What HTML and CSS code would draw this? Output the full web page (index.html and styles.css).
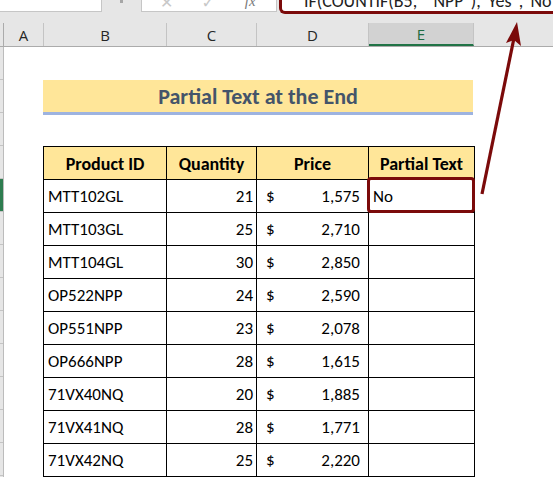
FILE: index.html
```html
<!DOCTYPE html>
<html>
<head>
<meta charset="utf-8">
<link rel="stylesheet" href="styles.css">
</head>
<body>
<div class="page">
  <div class="topbar">
    <div class="namebox"></div>
    <div class="dots"></div>
    <div class="fxbox">
      <span class="ico x">✕</span>
      <span class="ico ok">✓</span>
      <span class="ico fx">fx</span>
    </div>
    <div class="formula"><span class="ftext">IF(COUNTIF(B5,"*NPP"),"Yes","No")</span></div>
  </div>
  <div class="colheads">
    <div class="ch corner"></div>
    <div class="ch ca">A</div>
    <div class="ch cb">B</div>
    <div class="ch cc">C</div>
    <div class="ch cd">D</div>
    <div class="ch ce sel">E</div>
    <div class="ch cf"></div>
  </div>
  <div class="sheet">
    <div class="strip">
      <div class="rh"></div><div class="rh"></div><div class="rh"></div><div class="rh"></div>
      <div class="rh selrow"></div><div class="rh"></div><div class="rh"></div><div class="rh"></div>
      <div class="rh"></div><div class="rh"></div><div class="rh"></div><div class="rh"></div><div class="rh"></div>
    </div>
    <div class="main">
      <div class="title">Partial Text at the End</div>
      <table class="data">
        <colgroup><col class="w-b"><col class="w-c"><col class="w-d"><col class="w-e"></colgroup>
        <thead>
          <tr><th>Product ID</th><th>Quantity</th><th>Price</th><th>Partial Text</th></tr>
        </thead>
        <tbody>
          <tr><td>MTT102GL</td><td class="num">21</td><td><div class="price"><span>$</span><span>1,575</span></div></td><td>No</td></tr>
          <tr><td>MTT103GL</td><td class="num">25</td><td><div class="price"><span>$</span><span>2,710</span></div></td><td></td></tr>
          <tr><td>MTT104GL</td><td class="num">30</td><td><div class="price"><span>$</span><span>2,850</span></div></td><td></td></tr>
          <tr><td>OP522NPP</td><td class="num">24</td><td><div class="price"><span>$</span><span>2,590</span></div></td><td></td></tr>
          <tr><td>OP551NPP</td><td class="num">23</td><td><div class="price"><span>$</span><span>2,078</span></div></td><td></td></tr>
          <tr><td>OP666NPP</td><td class="num">28</td><td><div class="price"><span>$</span><span>1,615</span></div></td><td></td></tr>
          <tr><td>71VX40NQ</td><td class="num">20</td><td><div class="price"><span>$</span><span>1,885</span></div></td><td></td></tr>
          <tr><td>71VX41NQ</td><td class="num">28</td><td><div class="price"><span>$</span><span>1,771</span></div></td><td></td></tr>
          <tr><td>71VX42NQ</td><td class="num">25</td><td><div class="price"><span>$</span><span>2,220</span></div></td><td></td></tr>
        </tbody>
      </table>
    </div>
  </div>
  <div class="hilite"></div>
  <svg class="arrow" width="553" height="482" viewBox="0 0 553 482">
    <line x1="482" y1="194" x2="514" y2="38" stroke="#7b0a0a" stroke-width="3.2"/>
    <polygon points="517,22 521,46 514,40 506,43" fill="#7b0a0a"/>
  </svg>
</div>
</body>
</html>
```

FILE: styles.css
```css
* { box-sizing: border-box; }
html, body { margin: 0; padding: 0; background: #fff; }
.page {
  position: relative;
  width: 553px;
  height: 482px;
  overflow: hidden;
  font-family: Carlito, Lato, "Liberation Sans", sans-serif;
}
.topbar {
  height: 23px;
  background: #e6e6e6;
  display: flex;
  align-items: flex-start;
  overflow: hidden;
}
.namebox {
  width: 102px;
  height: 12px;
  background: #fff;
  border-right: 1px solid #c6c6c6;
  border-bottom: 1px solid #c6c6c6;
}
.dots {
  width: 3px;
  height: 3px;
  margin-left: 18px;
  background: #a6a6a6;
}
.fxbox {
  width: 136px;
  height: 12px;
  margin-left: 18px;
  background: #fff;
  border: 1px solid #c6c6c6;
  border-top: none;
  display: flex;
  align-items: flex-end;
  overflow: hidden;
}
.ico {
  font-family: "DejaVu Sans", sans-serif;
  font-size: 16px;
  line-height: 16px;
  margin-bottom: 0px;
  color: #c8c8c8;
}
.ico.x { margin-left: 18px; }
.ico.ok { margin-left: 28px; font-weight: bold; }
.ico.fx {
  margin-left: 30px;
  font-family: "Liberation Serif", serif;
  font-style: italic;
  color: #7a7a7a;
  font-size: 15px;
  margin-bottom: 2px;
}
.formula {
  flex: 1;
  height: 14px;
  margin-left: 2px;
  background: #fff;
  border: 3px solid #7b0a0a;
  border-top: none;
  border-right: none;
  border-bottom-left-radius: 6px;
  overflow: hidden;
  display: flex;
  align-items: flex-end;
  white-space: nowrap;
}
.ftext {
  font-size: 18px;
  line-height: 18px;
  margin-left: 22px;
  margin-bottom: 1px;
  color: #222;
}
.colheads {
  height: 24px;
  display: flex;
  background: #e6e6e6;
  border-bottom: 1px solid #ababab;
}
.ch {
  height: 100%;
  border-right: 1px solid #c4c4c4;
  display: flex;
  align-items: center;
  justify-content: center;
  font-family: "Open Sans", sans-serif;
  font-size: 15px;
  color: #262626;
}
.corner { width: 4px; border-right-color: #ababab; }
.ca { width: 40px; }
.cb { width: 123px; }
.cc { width: 90px; }
.cd { width: 112px; }
.ce { width: 105px; }
.cf { flex: 1; border-right: none; }
.sel {
  background: #d2d2d2;
  color: #1e6b41;
  border-bottom: 2px solid #217346;
}
.sheet {
  display: flex;
}
.strip {
  width: 4px;
  background: #e6e6e6;
  border-right: 1px solid #bcbcbc;
  display: flex;
  flex-direction: column;
}
.rh {
  height: 33px;
  border-bottom: 1px solid #c4c4c4;
}
.selrow { background: #2e7d50; }
.main {
  padding-left: 39px;
}
.title {
  margin-top: 33px;
  width: 430px;
  height: 35px;
  background: #ffe699;
  border-bottom: 3px solid #9db3e0;
  text-align: center;
  font-weight: 900;
  font-size: 22px;
  line-height: 33px;
  color: #44546a;
}
.data {
  margin-top: 31px;
  border-collapse: collapse;
  table-layout: fixed;
  width: 431px;
  font-size: 17px;
  color: #000;
}
.w-b { width: 123px; }
.w-c { width: 90px; }
.w-d { width: 112px; }
.w-e { width: 106px; }
.data th, .data td {
  border: 1px solid #000;
  height: 33px;
  padding: 0 0 0 4px;
  white-space: nowrap;
  overflow: hidden;
}
.data th {
  background: #ffe699;
  font-weight: 900;
  font-size: 18px;
  text-align: center;
  padding: 2px 0 0 0;
}
.data td.num {
  text-align: right;
  padding: 0 3px 0 0;
}
.price {
  display: flex;
  justify-content: space-between;
  padding: 0 8px 0 5px;
}
.hilite {
  position: absolute;
  left: 367px;
  top: 177px;
  width: 108px;
  height: 36px;
  border: 3px solid #7b0a0a;
  border-radius: 4px;
}
.arrow {
  position: absolute;
  left: 0;
  top: 0;
  pointer-events: none;
}
```
